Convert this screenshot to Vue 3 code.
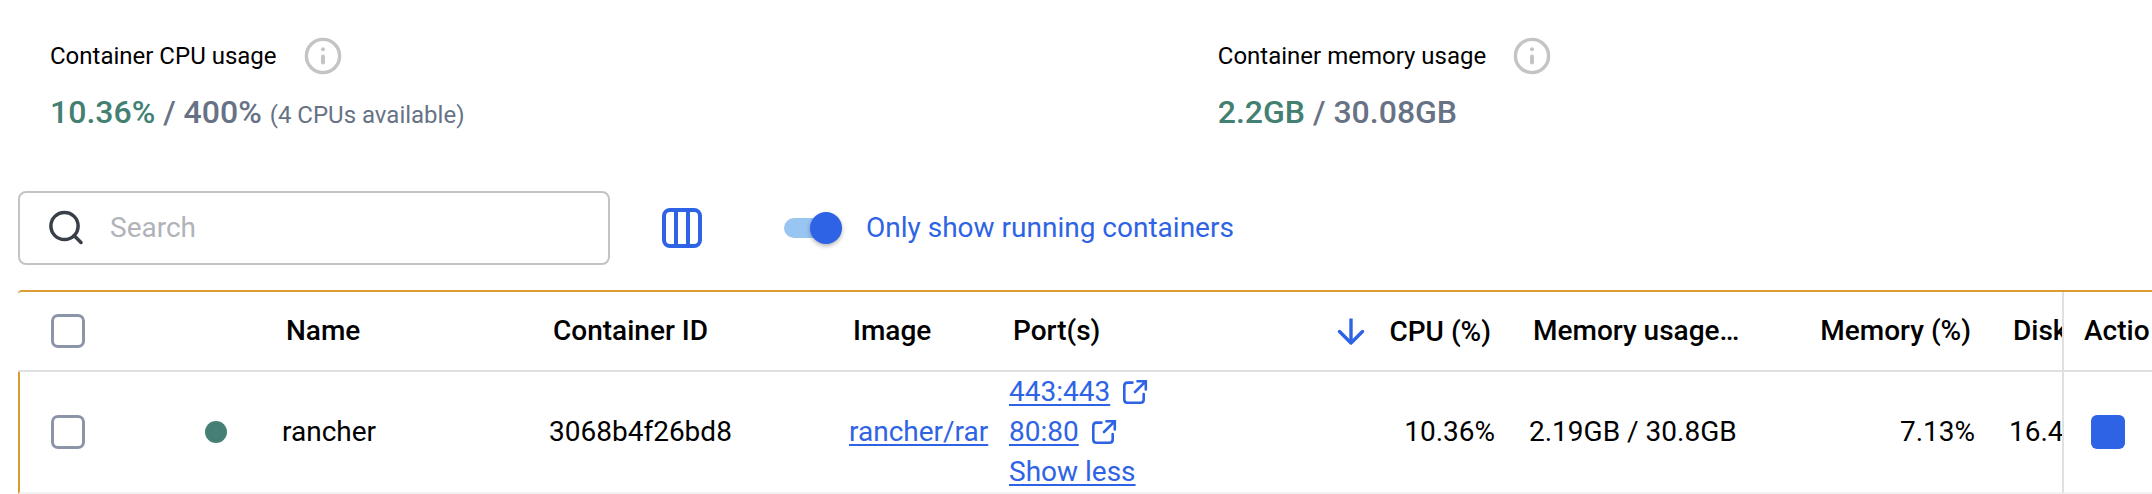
<script setup>
import { ref } from 'vue'

const search = ref('')
const onlyRunning = ref(true)
const stats = [
  { label: 'Container CPU usage', used: '10.36%', total: '400%', note: '(4 CPUs available)' },
  { label: 'Container memory usage', used: '2.2GB', total: '30.08GB', note: '' },
]
const containers = [
  {
    name: 'rancher',
    id: '3068b4f26bd8',
    image: 'rancher/rar',
    ports: ['443:443', '80:80'],
    cpu: '10.36%',
    memory: '2.19GB / 30.8GB',
    memoryPercent: '7.13%',
    disk: '16.4',
  },
]
</script>

<template>
  <main class="page">
    <section class="stats">
      <div v-for="s in stats" :key="s.label" class="stat">
        <div class="stat-label">
          <span>{{ s.label }}</span>
          <svg class="info" viewBox="0 0 38 38" aria-hidden="true">
            <circle cx="19" cy="19" r="16.6" fill="none" stroke="currentColor" stroke-width="3.4" />
            <circle cx="19" cy="12.3" r="2" fill="currentColor" />
            <path d="M19 19.6V25.4" stroke="currentColor" stroke-width="4" stroke-linecap="round" />
          </svg>
        </div>
        <div class="stat-value">
          <span class="used">{{ s.used }}</span> / {{ s.total }}
          <span v-if="s.note" class="note">{{ s.note }}</span>
        </div>
      </div>
    </section>

    <section class="toolbar">
      <label class="search">
        <svg class="search-icon" viewBox="0 0 36 36" fill="none" stroke="currentColor" stroke-width="3.5" aria-hidden="true">
          <circle cx="16.5" cy="16" r="13.6" />
          <path d="M26 25.5L33 32.5" stroke-linecap="round" />
        </svg>
        <input v-model="search" type="text" placeholder="Search" aria-label="Search" />
      </label>
      <button class="columns" type="button" aria-label="Choose columns">
        <svg viewBox="0 0 40 40" fill="none" stroke="currentColor" stroke-width="4" aria-hidden="true">
          <rect x="2" y="2" width="36" height="36" rx="6" />
          <path d="M14 2V38M26 2V38" />
        </svg>
      </button>
      <label class="running">
        <input v-model="onlyRunning" class="switch" type="checkbox" />
        <span>Only show running containers</span>
      </label>
    </section>

    <table class="grid">
      <colgroup>
        <col class="w-check" />
        <col class="w-status" />
        <col class="w-name" />
        <col class="w-id" />
        <col class="w-image" />
        <col />
        <col class="w-cpu" />
        <col class="w-memory" />
        <col class="w-memory" />
        <col class="w-disk" />
        <col class="w-actions" />
      </colgroup>
      <thead>
        <tr>
          <th class="check"><input class="box" type="checkbox" aria-label="Select all" /></th>
          <th aria-label="Status"></th>
          <th>Name</th>
          <th>Container ID</th>
          <th>Image</th>
          <th>Port(s)</th>
          <th class="num">
            <button class="sort" type="button">
              <svg viewBox="0 0 28 28" fill="none" stroke="currentColor" stroke-width="3.4" aria-hidden="true">
                <path d="M14 0.5V25" />
                <path d="M2.5 13.5L14 25L25.5 13.5" stroke-linecap="round" stroke-linejoin="round" />
              </svg>
              CPU (%)
            </button>
          </th>
          <th>Memory usage…</th>
          <th class="num">Memory (%)</th>
          <th>Disk</th>
          <th class="actions">Actio</th>
        </tr>
      </thead>
      <tbody>
        <tr v-for="c in containers" :key="c.id">
          <td class="check"><input class="box" type="checkbox" :aria-label="`Select ${c.name}`" /></td>
          <td class="status"><span class="dot"></span></td>
          <td>{{ c.name }}</td>
          <td>{{ c.id }}</td>
          <td><a href="#">{{ c.image }}</a></td>
          <td>
            <div v-for="p in c.ports" :key="p" class="port">
              <a href="#">{{ p }}</a>
              <svg viewBox="0 0 26 26" fill="none" stroke="currentColor" stroke-width="2.6" stroke-linecap="round" aria-hidden="true">
                <path d="M10.5 3.6H5.5Q2.3 3.6 2.3 6.8V20.5Q2.3 23.7 5.5 23.7H18.5Q21.7 23.7 21.7 20.5V15" />
                <path d="M15.5 2.2H23.8V10.5M23.4 2.6L13 13" />
              </svg>
            </div>
            <div class="port"><a href="#">Show less</a></div>
          </td>
          <td class="num">{{ c.cpu }}</td>
          <td>{{ c.memory }}</td>
          <td class="num">{{ c.memoryPercent }}</td>
          <td>{{ c.disk }}</td>
          <td class="actions"><button class="stop" type="button" aria-label="Stop"></button></td>
        </tr>
      </tbody>
    </table>
  </main>
</template>

<style>
body {
  margin: 0;
  background: #fff;
}
</style>

<style scoped>
.page {
  overflow: hidden;
  padding: 32px 0 0 18px;
  font-family: Roboto, "Liberation Sans", sans-serif;
  font-size: 28px;
  line-height: 40px;
  color: #000;
}
button,
input {
  margin: 0;
  padding: 0;
  border: 0;
  background: none;
  font: inherit;
  color: inherit;
}
svg {
  display: block;
  flex: none;
}
.stats {
  display: grid;
  grid-template-columns: 5fr 4fr;
  padding-left: 32px;
}
.stat-label {
  display: flex;
  align-items: center;
  gap: 27px;
  height: 48px;
  font-size: 24px;
}
.info {
  width: 38px;
  height: 38px;
  color: #c4c4c4;
}
.stat-value {
  margin-top: 8px;
  font-size: 32px;
  line-height: 48px;
  font-weight: 500;
  color: #677285;
}
.used {
  color: #437f72;
}
.note {
  font-size: 24px;
  font-weight: 400;
}
.toolbar {
  display: flex;
  align-items: center;
  margin-top: 52px;
}
.search {
  display: flex;
  align-items: center;
  gap: 26px;
  box-sizing: border-box;
  width: 592px;
  height: 74px;
  padding: 0 28px;
  border: 2px solid #c4c4c4;
  border-radius: 8px;
}
.search-icon {
  width: 36px;
  height: 36px;
  color: #393f49;
}
.search input {
  flex: 1;
  min-width: 0;
  outline: 0;
}
.search input::placeholder {
  color: #b1b3b8;
  opacity: 1;
}
.columns {
  margin-left: 52px;
  color: #2f63e6;
}
.columns svg {
  width: 40px;
  height: 40px;
}
.running {
  display: flex;
  align-items: center;
  gap: 24px;
  margin-left: 82px;
  color: #2f63e6;
}
.switch {
  appearance: none;
  display: flex;
  align-items: center;
  width: 58px;
  height: 32px;
}
.switch::before {
  content: "";
  width: 52px;
  height: 20px;
  border-radius: 10px;
  background: #99c5f3;
}
.switch::after {
  content: "";
  flex: none;
  width: 32px;
  height: 32px;
  margin-left: -26px;
  border-radius: 50%;
  background: #2f63e6;
  box-shadow: 0 2px 4px rgba(0, 0, 0, 0.3);
}
.grid {
  width: 100%;
  margin-top: 25px;
  table-layout: fixed;
  border-collapse: separate;
  border-spacing: 0;
  border-top: 2px solid #dc9c35;
  border-top-left-radius: 4px;
}
.w-check { width: 172px; }
.w-status { width: 80px; }
.w-name { width: 267px; }
.w-id { width: 300px; }
.w-image { width: 160px; }
.w-cpu { width: 220px; }
.w-memory { width: 240px; }
.w-disk { width: 65px; }
.w-actions { width: 90px; }
th,
td {
  overflow: hidden;
  padding: 0 0 0 12px;
  text-align: left;
  white-space: nowrap;
  vertical-align: middle;
}
th {
  height: 78px;
  padding-left: 16px;
  border-bottom: 2px solid #e0e0e0;
  font-weight: 500;
}
td {
  border-bottom: 2px solid #f2f2f2;
}
.num {
  padding-right: 22px;
  text-align: right;
}
th.num {
  padding-right: 26px;
}
th.check {
  padding-left: 33px;
}
td.check {
  padding-left: 31px;
  border-left: 2px solid #dc9c35;
}
.box {
  appearance: none;
  display: block;
  box-sizing: border-box;
  width: 34px;
  height: 34px;
  border: 3px solid #8c95a8;
  border-radius: 7px;
}
.status {
  padding-left: 15px;
}
.dot {
  display: block;
  width: 22px;
  height: 22px;
  border-radius: 50%;
  background: #467f73;
}
a {
  color: #2f63e6;
  text-decoration: underline;
  text-decoration-thickness: 2px;
  text-underline-offset: 3px;
}
.port {
  display: flex;
  align-items: center;
  gap: 12px;
  color: #2f63e6;
}
.port svg {
  width: 26px;
  height: 26px;
}
.sort {
  display: inline-flex;
  align-items: center;
  gap: 24px;
  vertical-align: middle;
}
.sort svg {
  width: 28px;
  height: 28px;
  color: #2f63e6;
}
.actions {
  border-left: 2px solid #e0e0e0;
}
th.actions {
  padding-left: 20px;
}
td.actions {
  padding-left: 27px;
}
.stop {
  display: block;
  width: 34px;
  height: 34px;
  border-radius: 6px;
  background: #2f63e6;
}
</style>
